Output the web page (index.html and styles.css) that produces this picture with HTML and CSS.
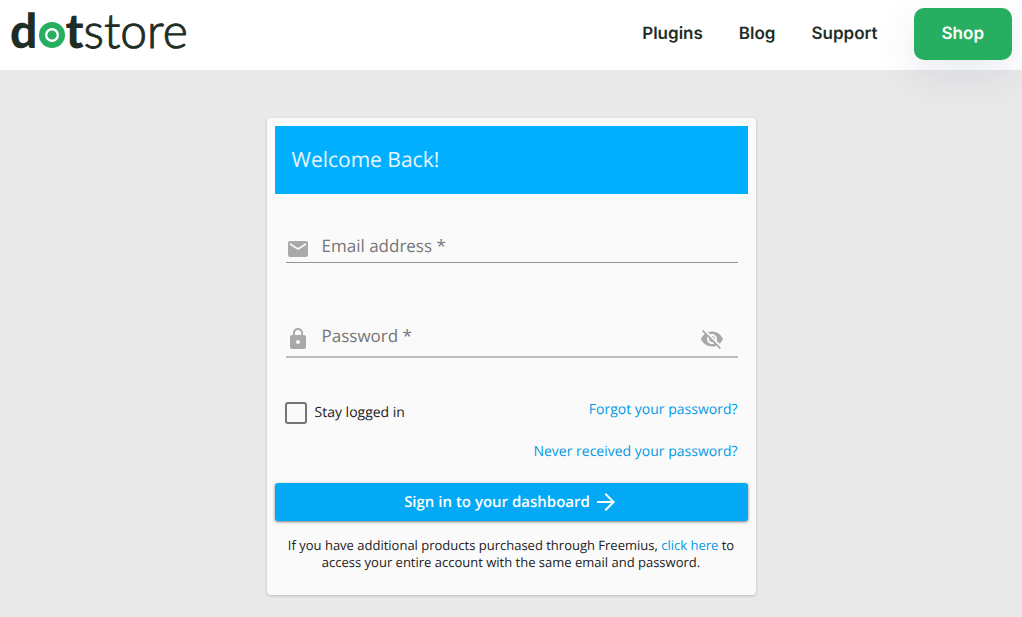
FILE: index.html
```html
<!DOCTYPE html>
<html lang="en">
<head>
  <meta charset="UTF-8">
  <meta name="viewport" content="width=device-width, initial-scale=1.0">
  <title>Dotstore - Sign in</title>
  <link rel="stylesheet" href="styles.css">
</head>
<body>
  <header class="site-header">
    <a class="logo" href="#" aria-label="dotstore">
      <span class="logo-bold">d</span>
      <svg class="logo-dot" viewBox="0 0 26 26" aria-hidden="true">
        <circle cx="13" cy="13" r="13" fill="#27ae60"/>
        <circle cx="13" cy="13" r="5.8" fill="#27ae60" stroke="#fff" stroke-width="2.4"/>
      </svg>
      <span class="logo-bold">t</span>
      <span class="logo-light">store</span>
    </a>
    <nav class="nav">
      <a href="#">Plugins</a>
      <a href="#">Blog</a>
      <a href="#">Support</a>
      <a class="shop" href="#">Shop</a>
    </nav>
  </header>

  <main class="card">
    <h1 class="card-title">Welcome Back!</h1>
    <form>
      <div class="field">
        <svg class="icon" viewBox="0 0 24 24" aria-hidden="true">
          <path d="M20 4H4c-1.1 0-1.99.9-1.99 2L2 18c0 1.1.9 2 2 2h16c1.1 0 2-.9 2-2V6c0-1.1-.9-2-2-2zm0 4l-8 5-8-5V6l8 5 8-5v2z"/>
        </svg>
        <div class="control">
          <input type="email" id="email" placeholder=" " required>
          <label for="email">Email address *</label>
        </div>
      </div>

      <div class="field field-password">
        <svg class="icon" viewBox="0 0 24 24" aria-hidden="true">
          <path d="M18 8h-1V6c0-2.76-2.24-5-5-5S7 3.24 7 6v2H6c-1.1 0-2 .9-2 2v10c0 1.1.9 2 2 2h12c1.1 0 2-.9 2-2V10c0-1.1-.9-2-2-2zm-6 9c-1.1 0-2-.9-2-2s.9-2 2-2 2 .9 2 2-.9 2-2 2zm3.1-9H8.9V6c0-1.71 1.39-3.1 3.1-3.1 1.71 0 3.1 1.39 3.1 3.1v2z"/>
        </svg>
        <div class="control">
          <input type="password" id="password" placeholder=" " required>
          <label for="password">Password *</label>
        </div>
        <button class="toggle" type="button" aria-label="Show password">
          <svg class="icon" viewBox="0 0 24 24" aria-hidden="true">
            <path d="M12 7c2.76 0 5 2.24 5 5 0 .65-.13 1.26-.36 1.83l2.92 2.92c1.51-1.26 2.7-2.89 3.43-4.75-1.73-4.39-6-7.5-11-7.5-1.4 0-2.74.25-3.98.7l2.16 2.16C10.74 7.13 11.35 7 12 7zM2 4.27l2.28 2.28.46.46C3.08 8.3 1.78 10.02 1 12c1.73 4.39 6 7.5 11 7.5 1.55 0 3.03-.3 4.38-.84l.42.42L19.73 22 21 20.73 3.27 3 2 4.27zM7.53 9.8l1.55 1.55c-.05.21-.08.43-.08.65 0 1.66 1.34 3 3 3 .22 0 .44-.03.65-.08l1.55 1.55c-.67.33-1.41.53-2.2.53-2.76 0-5-2.24-5-5 0-.79.2-1.53.53-2.2zm4.31-.78l3.15 3.15.02-.16c0-1.66-1.34-3-3-3l-.17.01z"/>
          </svg>
        </button>
      </div>

      <div class="options">
        <label class="stay"><input type="checkbox"> Stay logged in</label>
        <div class="links">
          <a href="#">Forgot your password?</a>
          <a href="#">Never received your password?</a>
        </div>
      </div>

      <button class="submit" type="submit">
        Sign in to your dashboard
        <svg viewBox="0 0 24 24" aria-hidden="true">
          <path d="M12 3l-1.41 1.41L17.17 11H3v2h14.17l-6.58 6.59L12 21l9-9z"/>
        </svg>
      </button>
    </form>
    <p class="note">If you have additional products purchased through Freemius, <a href="#">click here</a> to access your entire account with the same email and password.</p>
  </main>
</body>
</html>
```

FILE: styles.css
```css
* {
  box-sizing: border-box;
}
body {
  margin: 0;
  background: #e9e9e9;
  color: #212121;
  font-family: "Open Sans", sans-serif;
  font-size: 14px;
  text-rendering: geometricPrecision;
}
a {
  color: #039be5;
  text-decoration: none;
}

/* header */
.site-header {
  position: relative;
  display: flex;
  justify-content: space-between;
  align-items: center;
  height: 70px;
  padding: 0 10px 3px;
  background: #fff;
}
.logo {
  display: flex;
  align-items: baseline;
  padding-bottom: 6px;
  color: #1f2d27;
  font-family: Lato, sans-serif;
  font-size: 48px;
  line-height: 60px;
}
.logo-bold {
  font-weight: 900;
}
.logo-light {
  font-weight: 300;
  -webkit-text-stroke: 1px #1f2d27;
}
.logo-dot {
  width: 26px;
  height: 26px;
  margin-left: 2px;
}
.nav {
  display: flex;
  align-items: center;
  gap: 36px;
}
.nav a {
  color: #1f2d27;
  font-family: Inter, sans-serif;
  font-size: 17px;
  font-weight: 600;
}
.nav .shop {
  padding: 0 28px;
  border-radius: 10px;
  background: #27ae60;
  box-shadow: 0 13px 40px rgba(31, 45, 90, 0.1);
  color: #fff;
  line-height: 52px;
}

/* login card */
.card {
  max-width: 489px;
  margin: 48px auto 22px;
  padding: 8px 8px 24px;
  border-radius: 4px;
  background: #fafafa;
  box-shadow: 0 1px 3px rgba(0, 0, 0, 0.2);
}
.card-title {
  margin: 0 0 36px;
  padding: 0 17px;
  background: #00b0ff;
  color: #e8f6ff;
  font-size: 21px;
  font-weight: 400;
  line-height: 68px;
}
.field {
  display: flex;
  align-items: center;
  gap: 12px;
  margin: 0 10px 0 11px;
  border-bottom: 1px solid #949494;
}
.field-password {
  margin-top: 57px;
  padding-bottom: 4px;
  border-bottom: 2px solid #bdbdbd;
}
.icon {
  display: block;
  width: 24px;
  height: 24px;
  margin-top: 5px;
  fill: #a9a9a9;
}
.control {
  position: relative;
  flex: 1;
}
.control input {
  display: block;
  width: 100%;
  height: 32px;
  padding: 0;
  border: 0;
  outline: 0;
  background: none;
  font: inherit;
  font-size: 17px;
}
.control label {
  position: absolute;
  top: 0;
  left: 0;
  color: #757575;
  font-size: 17px;
  line-height: 32px;
  pointer-events: none;
}
.control input:not(:placeholder-shown) + label {
  display: none;
}
.toggle {
  margin-right: 14px;
  padding: 0;
  border: 0;
  background: none;
  cursor: pointer;
}
.options {
  display: flex;
  justify-content: space-between;
  align-items: flex-start;
  margin: 42px 10px 0;
}
.stay {
  display: flex;
  align-items: center;
  gap: 8px;
  line-height: 26px;
}
.stay input {
  appearance: none;
  width: 22px;
  height: 22px;
  margin: 0;
  border: 2px solid #757575;
  border-radius: 3px;
}
.stay input:checked {
  background: #03a9f4;
}
.links {
  display: flex;
  flex-direction: column;
  gap: 22px;
  line-height: 20px;
  text-align: right;
}
.submit {
  display: flex;
  justify-content: center;
  align-items: center;
  gap: 4px;
  width: 100%;
  height: 38px;
  margin-top: 21px;
  border: 0;
  border-radius: 3px;
  background: #03a9f4;
  box-shadow: 0 1px 3px rgba(0, 0, 0, 0.5);
  color: #fff;
  font: inherit;
  font-size: 15px;
  font-weight: 600;
  text-rendering: inherit;
  cursor: pointer;
}
.submit svg {
  width: 24px;
  height: 24px;
  fill: #fff;
}
.note {
  margin: 16px 12px 0;
  font-size: 13px;
  line-height: 17px;
  text-align: center;
}
```
